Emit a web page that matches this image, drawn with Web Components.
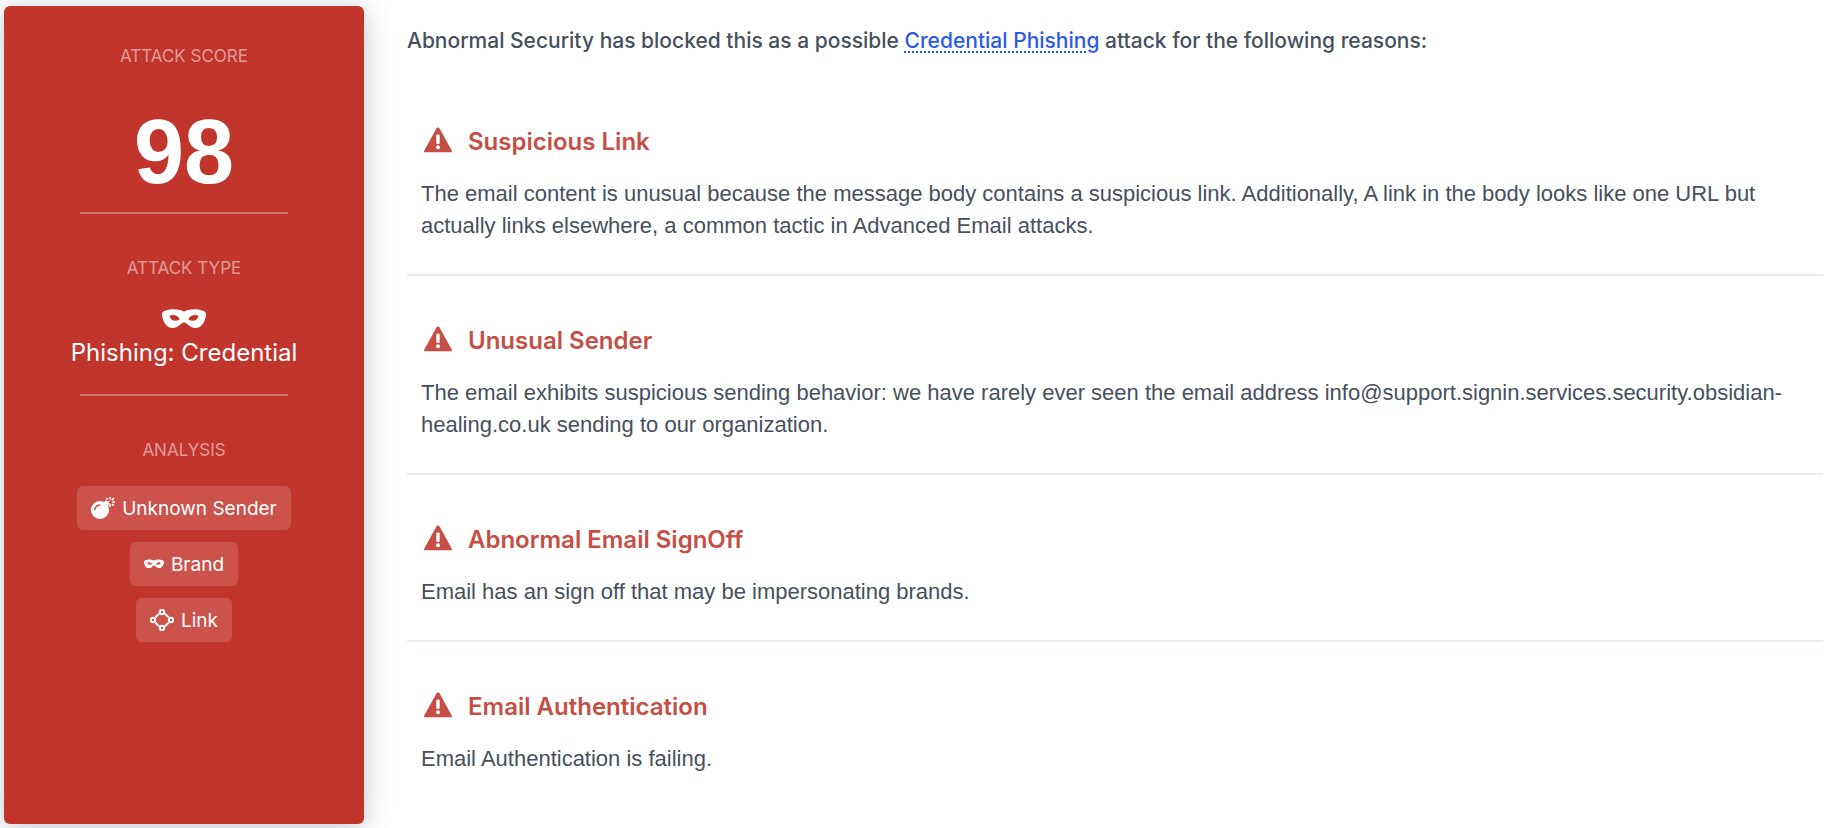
<!DOCTYPE html>
<html lang="en">
<head>
<meta charset="utf-8">
<meta name="viewport" content="width=device-width, initial-scale=1">
<title>Attack analysis</title>
<style>
  body { margin: 0; background: #fff; color: #47505c; font: 20px/32px Inter, "Liberation Sans", sans-serif; }
</style>
</head>
<body>
<attack-report>
  <attack-summary slot="summary">
    <summary-section label="Attack Score" divided>
      <attack-score>98</attack-score>
    </summary-section>
    <summary-section label="Attack Type" divided>
      <attack-type>Phishing: Credential</attack-type>
    </summary-section>
    <summary-section label="Analysis">
      <chip-list>
        <analysis-chip icon="bomb">Unknown Sender</analysis-chip>
        <analysis-chip icon="mask">Brand</analysis-chip>
        <analysis-chip icon="link">Link</analysis-chip>
      </chip-list>
    </summary-section>
  </attack-summary>
  <report-heading>Abnormal Security has blocked this as a possible <term-link href="#credential-phishing">Credential Phishing</term-link> attack for the following reasons:</report-heading>
  <attack-reason heading="Suspicious Link">The email content is unusual because the message body contains a suspicious link. Additionally, A link in the body looks like one URL but actually links elsewhere, a common tactic in Advanced Email attacks.</attack-reason>
  <attack-reason heading="Unusual Sender">The email exhibits suspicious sending behavior: we have rarely ever seen the email address info@support.signin.services.security.obsidian-healing.co.uk sending to our organization.</attack-reason>
  <attack-reason heading="Abnormal Email SignOff">Email has an sign off that may be impersonating brands.</attack-reason>
  <attack-reason heading="Email Authentication">Email Authentication is failing.</attack-reason>
</attack-report>
<script>
const icons = {
  mask: `<svg viewBox="0 0 44 20" fill="currentColor" fill-rule="evenodd" aria-hidden="true"><path d="M0 5C0 3 1.500 2.200 4 1.500C9-.4 16-.3 22 2.500C28-.3 35-.4 40 1.500C42.500 2.200 44 3 44 5C44 9 42 14 39 17C36 19.500 31 19.500 27.500 17C25.500 15.500 24 13.500 22 13.500C20 13.500 18.500 15.500 16.500 17C13 19.500 8 19.500 5 17C2 14 0 9 0 5ZM7.500 7C8.500 10.500 11 12 14 11.800C16 11.600 17.200 11 17.500 10C16.500 7.500 13.500 6 11 6C9.500 6 8.200 6.300 7.500 7ZM36.500 7C35.500 10.500 33 12 30 11.800C28 11.600 26.800 11 26.500 10C27.500 7.500 30.500 6 33 6C34.500 6 35.800 6.300 36.500 7Z"/></svg>`,
  bomb: `<svg viewBox="0 0 24 22" fill="none" stroke="currentColor" aria-hidden="true"><circle cx="9" cy="13" r="9" fill="currentColor" stroke="none"/><path d="M12 6l3-3 4 4-3 3z" fill="currentColor" stroke="none"/><path d="M17 5l1.500-1" stroke-width="1.500"/><path d="M15.500 1l1 1.500M19 0v2.600M22.800 1.200l-2 1.900M24 5h-2.700M22.800 8.600l-2-1.700M19 10V7.600" stroke-width="1.600"/><path d="M3.700 12.500C4.200 9.800 6 8.200 8.800 7.900" stroke="#cd534c" stroke-width="1.500" stroke-linecap="round"/></svg>`,
  link: `<svg viewBox="0 0 24 22" fill="none" stroke="currentColor" stroke-width="2" aria-hidden="true"><circle cx="12" cy="3" r="2.200"/><circle cx="3" cy="11" r="2.200"/><circle cx="21" cy="11" r="2.200"/><circle cx="12" cy="19" r="2.200"/><path d="M9 4.800L5.500 8.200M15 4.800L18.500 8.200M9 17.200L5.500 13.800M15 17.200L18.500 13.800"/></svg>`,
  warning: `<svg viewBox="0 0 28 26" aria-hidden="true"><path d="M14 0.500C14.700 .5 15.200 .9 15.600 1.600L27.700 23.500C28.200 24.700 27.900 25.300 26.800 25.300H1.200C.1 25.300-.2 24.700.3 23.500L12.400 1.600C12.800.9 13.300.5 14 .5Z" fill="currentColor"/><rect x="12.300" y="7.500" width="3.400" height="9.500" rx="1.200" fill="#fff"/><circle cx="14" cy="20.300" r="2" fill="#fff"/></svg>`
};

function define(name, render) {
  customElements.define(name, class extends HTMLElement {
    connectedCallback() {
      if (this.shadowRoot) return;
      this.attachShadow({ mode: 'open' }).innerHTML = render(this);
    }
  });
}

define('attack-report', () => `
  <style>
    :host { display: flex; align-items: stretch; gap: 43px; min-height: 100vh; box-sizing: border-box; padding: 6px 7px 4px 4px; }
    aside { display: flex; flex: 0 0 360px; }
    main { flex: 1; min-width: 0; }
  </style>
  <aside><slot name="summary"></slot></aside>
  <main><slot></slot></main>`);

define('attack-summary', () => `
  <style>
    :host { display: block; flex: 1; box-sizing: border-box; padding-top: 34px; background: #c2352d; color: #fff;
      border-radius: 6px; box-shadow: 0 4px 28px rgba(40, 55, 80, .28); text-align: center; }
  </style>
  <slot></slot>`);

define('summary-section', el => `
  <style>
    :host { display: block; }
    h2 { margin: 0; font-size: 17px; line-height: 32px; font-weight: 400; text-transform: uppercase; color: rgba(255, 255, 255, .5); }
    hr { width: 208px; height: 2px; margin: 0 auto 38px; border: 0; background: rgba(255, 255, 255, .3); }
  </style>
  <h2>${el.getAttribute('label')}</h2>
  <slot></slot>
  ${el.hasAttribute('divided') ? '<hr>' : ''}`);

define('attack-score', () => `
  <style>:host { display: block; padding: 32px 0 12px; font-family: "Liberation Sans", Arial, sans-serif; font-size: 90px; line-height: 96px; font-weight: 700; }</style>
  <slot></slot>`);

define('attack-type', () => `
  <style>
    :host { display: block; padding: 25px 0; font-size: 24px; line-height: 32px; }
    svg { display: block; width: 44px; height: 20px; margin: 0 auto 8px; }
  </style>
  ${icons.mask}<slot></slot>`);

define('chip-list', () => `
  <style>:host { display: flex; flex-direction: column; align-items: center; gap: 12px; padding-top: 20px; }</style>
  <slot></slot>`);

define('analysis-chip', el => `
  <style>
    :host { display: flex; align-items: center; gap: 7px; box-sizing: border-box; height: 44px; padding: 0 14px;
      border-radius: 6px; background: rgba(255, 255, 255, .15); font-size: 19px; line-height: 44px; }
    svg { width: ${el.getAttribute('icon') === 'mask' ? 20 : 24}px; height: 22px; }
    span { padding-top: 2px; }
  </style>
  ${icons[el.getAttribute('icon')]}<span><slot></slot></span>`);

define('report-heading', () => `
  <style>
    :host { display: block; }
    h1 { margin: 0; padding: 19px 0 51px; font-size: 21px; line-height: 32px; font-weight: 500; }
  </style>
  <h1><slot></slot></h1>`);

define('term-link', el => `
  <style>a { color: #2a5bea; text-decoration: underline dotted 2px; text-underline-offset: 3px; }</style>
  <a href="${el.getAttribute('href')}"><slot></slot></a>`);

define('attack-reason', el => `
  <style>
    :host { display: block; padding: 18px 14px 32px; border-bottom: 2px solid #eaeef2; }
    :host(:not(:last-of-type)) { margin-bottom: 31px; }
    :host(:last-of-type) { border-bottom: 0; }
    h2 { display: flex; align-items: center; gap: 16px; margin: 0 0 20px; font-size: 24px; line-height: 32px; font-weight: 600; color: #c54f45; }
    svg { width: 28px; height: 26px; margin: 0 0 4px 3px; }
    p { margin: 0; font-family: "Liberation Sans", Arial, sans-serif; font-size: 22px; }
  </style>
  <h2>${icons.warning}<span>${el.getAttribute('heading')}</span></h2>
  <p><slot></slot></p>`);
</script>
</body>
</html>
